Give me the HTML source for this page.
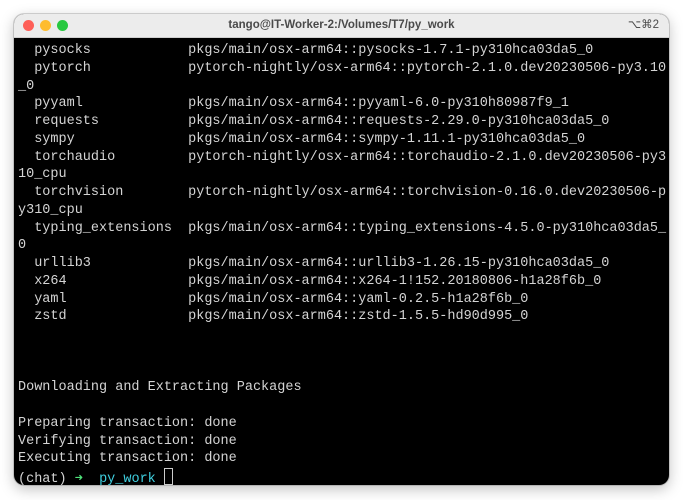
<!DOCTYPE html>
<html><head><style>
body{margin:0;width:683px;height:500px;background:#fff;overflow:hidden;position:relative}
.win{position:absolute;left:14px;top:14px;width:655px;height:471px;border-radius:10px;background:#000;overflow:hidden;box-shadow:0 4px 14px rgba(0,0,0,.25),0 0 0 1px rgba(0,0,0,.15)}
.tb{height:23px;background:#ececec;border-bottom:1px solid #cfcfcf;position:relative;font:bold 11.5px "Liberation Sans",sans-serif;color:#4a4a4a;text-align:center;line-height:23px}
.d{position:absolute;top:6px;width:11px;height:11px;border-radius:50%}
.k{position:absolute;right:10px;top:0;font-weight:normal}
pre{margin:0;position:absolute;left:4px;top:28px;font:13.5px/17.75px "Liberation Mono",monospace;color:#d4d4d4}
.g{color:#4fe37a}.c{color:#3fd0e0}
.cur{display:inline-block;width:7px;height:15px;border:1px solid #ccc;vertical-align:-3px}
</style></head><body>
<div class="win">
<div class="tb"><div class="d" style="left:9px;background:#fe5f57"></div><div class="d" style="left:26px;background:#febc2e"></div><div class="d" style="left:43px;background:#28c840"></div>tango@IT-Worker-2:/Volumes/T7/py_work<span class="k">⌥⌘2</span></div>
<pre>  pysocks            pkgs/main/osx-arm64::pysocks-1.7.1-py310hca03da5_0
  pytorch            pytorch-nightly/osx-arm64::pytorch-2.1.0.dev20230506-py3.10
_0
  pyyaml             pkgs/main/osx-arm64::pyyaml-6.0-py310h80987f9_1
  requests           pkgs/main/osx-arm64::requests-2.29.0-py310hca03da5_0
  sympy              pkgs/main/osx-arm64::sympy-1.11.1-py310hca03da5_0
  torchaudio         pytorch-nightly/osx-arm64::torchaudio-2.1.0.dev20230506-py3
10_cpu
  torchvision        pytorch-nightly/osx-arm64::torchvision-0.16.0.dev20230506-p
y310_cpu
  typing_extensions  pkgs/main/osx-arm64::typing_extensions-4.5.0-py310hca03da5_
0
  urllib3            pkgs/main/osx-arm64::urllib3-1.26.15-py310hca03da5_0
  x264               pkgs/main/osx-arm64::x264-1!152.20180806-h1a28f6b_0
  yaml               pkgs/main/osx-arm64::yaml-0.2.5-h1a28f6b_0
  zstd               pkgs/main/osx-arm64::zstd-1.5.5-hd90d995_0



Downloading and Extracting Packages

Preparing transaction: done
Verifying transaction: done
Executing transaction: done
(chat) <span class="g">➜</span>  <span class="c">py_work</span> <span class="cur"></span></pre>
</div>
</body></html>
